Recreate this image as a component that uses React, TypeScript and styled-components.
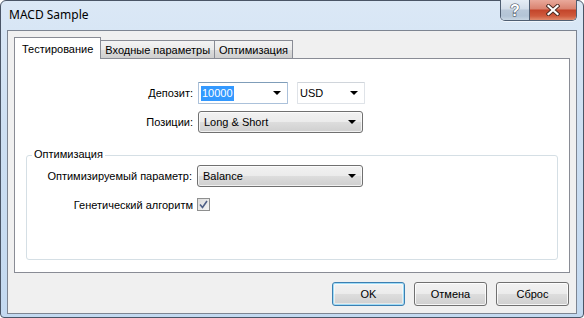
import styled, { createGlobalStyle } from "styled-components";

const Global = createGlobalStyle`
    html, body {
        margin: 0;
        padding: 0;
        background: #ffffff;
    }
    * {
        box-sizing: border-box;
    }
`;

const Window = styled.div`
    width: 584px;
    height: 318px;
    display: flex;
    flex-direction: column;
    padding: 0 6px 3px 6px;
    border: 1px solid #4a5566;
    border-radius: 6px 6px 4px 4px;
    background: linear-gradient(180deg, #dbe8f6 0%, #cddff2 40%, #c3d9f0 100%);
    font-family: "Liberation Sans", Arial, sans-serif;
    font-size: 11px;
    color: #000;
`;

const TitleBar = styled.div`
    height: 29px;
    display: flex;
    justify-content: space-between;
    align-items: flex-start;
    padding-left: 2px;
`;

const Title = styled.div`
    font-family: "Noto Sans", "Open Sans", sans-serif;
    font-size: 12px;
    line-height: 16px;
    margin-top: 6px;
    color: #000;
`;

const Captions = styled.div`
    display: flex;
    margin-top: -1px;
    border: 1px solid #4f5e72;
    border-top: none;
    border-radius: 0 0 5px 5px;
    overflow: hidden;
    box-shadow: 0 1px 0 rgba(255, 255, 255, 0.6);
`;

const CapButton = styled.div<{ $close?: boolean }>`
    width: ${(p) => (p.$close ? 47 : 28)}px;
    height: 20px;
    display: flex;
    align-items: center;
    justify-content: center;
    background: ${(p) =>
        p.$close
            ? "linear-gradient(180deg, #e9a99b 0%, #d9826f 45%, #c3442a 50%, #cf5a3d 80%, #e08a6d 100%)"
            : "linear-gradient(180deg, #e6edf5 0%, #d3dde9 45%, #b9c8d9 50%, #b3c4d6 80%, #c8d6e4 100%)"};
    & + & {
        border-left: 1px solid #4f5e72;
    }
`;

const Help = styled.span`
    font-family: "Liberation Sans", Arial, sans-serif;
    font-weight: bold;
    font-size: 16px;
    line-height: 16px;
    color: #fff;
    -webkit-text-stroke: 1px #3a4656;
    paint-order: stroke fill;
    margin-top: 1px;
`;

const Client = styled.div`
    flex: 1;
    display: flex;
    flex-direction: column;
    background: #f0f0f0;
    border: 1px solid #7d8592;
    padding: 6px 6px 7px 6px;
`;

const TabStrip = styled.div`
    height: 21px;
    display: flex;
    align-items: flex-end;
`;

const Tab = styled.div<{ $active?: boolean }>`
    position: relative;
    display: flex;
    align-items: center;
    justify-content: center;
    border: 1px solid #898c95;
    border-bottom: none;
    white-space: nowrap;
    height: ${(p) => (p.$active ? 22 : 18)}px;
    margin-bottom: ${(p) => (p.$active ? -1 : 0)}px;
    padding: ${(p) => (p.$active ? "0 7px 0 7px" : "0 4px")};
    background: ${(p) =>
        p.$active ? "#ffffff" : "linear-gradient(180deg, #f3f3f3 0%, #ebebeb 50%, #dddddd 51%, #cfcfcf 100%)"};
    z-index: ${(p) => (p.$active ? 2 : 1)};
    & + & {
        margin-left: -1px;
    }
`;

const Panel = styled.div`
    flex: 1;
    display: flex;
    flex-direction: column;
    background: #ffffff;
    border: 1px solid #898c95;
`;

const FormGrid = styled.div<{ $label: number }>`
    display: grid;
    grid-template-columns: ${(p) => p.$label}px auto;
    column-gap: 5px;
    align-items: center;
    justify-items: start;
`;

const MainForm = styled(FormGrid)`
    margin-top: 23px;
    row-gap: 7px;
`;

const Label = styled.div`
    justify-self: end;
    white-space: nowrap;
`;

const Inline = styled.div`
    display: flex;
    gap: 9px;
`;

const Combo = styled.div<{ $w: number; $button?: boolean; $edit?: boolean }>`
    width: ${(p) => p.$w}px;
    height: 22px;
    display: flex;
    align-items: center;
    justify-content: space-between;
    padding: 0 6px 0 ${(p) => (p.$button ? 5 : 2)}px;
    border: 1px solid ${(p) => (p.$button ? "#707070" : p.$edit ? "#abc1da" : "#dfe3e8")};
    border-top-color: ${(p) => (p.$button ? "#707070" : p.$edit ? "#7f9db9" : "#d0d5db")};
    border-radius: ${(p) => (p.$button ? 3 : 1)}px;
    background: ${(p) =>
        p.$button ? "linear-gradient(180deg, #f2f2f2 0%, #ebebeb 50%, #dddddd 51%, #cfcfcf 100%)" : "#ffffff"};
    box-shadow: ${(p) => (p.$button ? "inset 0 0 0 1px rgba(255,255,255,0.7)" : "none")};
`;

const Selected = styled.span`
    background: #3399ff;
    color: #fff;
    padding: 1px 1px 2px 1px;
`;

const Arrow = styled.span`
    width: 0;
    height: 0;
    border-left: 4px solid transparent;
    border-right: 4px solid transparent;
    border-top: 4px solid #000;
`;

const Group = styled.div`
    position: relative;
    margin: 22px 11px 12px 11px;
    flex: 1;
    border: 1px solid #d5dfe5;
    border-radius: 3px;
    padding-top: 9px;
`;

const GroupCaption = styled.span`
    position: absolute;
    top: -8px;
    left: 5px;
    padding: 0 2px;
    background: #ffffff;
`;

const GroupForm = styled(FormGrid)`
    row-gap: 11px;
`;

const CheckLabel = styled(Label)`
    margin-right: -1px;
`;

const Check = styled.div`
    width: 13px;
    height: 13px;
    border: 1px solid #8e8f8f;
    background: linear-gradient(135deg, #dcdcdc 0%, #f4f4f4 100%);
    display: flex;
    align-items: center;
    justify-content: center;
`;

const ButtonRow = styled.div`
    display: flex;
    justify-content: flex-end;
    gap: 9px;
    margin-top: 9px;
    padding-right: 1px;
`;

const Button = styled.div<{ $default?: boolean }>`
    width: 73px;
    height: 24px;
    display: flex;
    align-items: center;
    justify-content: center;
    border: 1px solid ${(p) => (p.$default ? "#3c7fb1" : "#707070")};
    border-radius: 3px;
    background: linear-gradient(180deg, #f2f2f2 0%, #ebebeb 50%, #dddddd 51%, #cfcfcf 100%);
    box-shadow: ${(p) =>
        p.$default ? "inset 0 0 0 1px #9fdcf7, inset 0 0 0 2px rgba(255,255,255,0.5)" : "inset 0 0 0 1px rgba(255,255,255,0.8)"};
`;

function CloseIcon() {
    return (
        <svg width="14" height="12" viewBox="0 0 14 12">
            <path d="M2.5 2 L11.5 10 M11.5 2 L2.5 10" stroke="#4a2a22" strokeWidth="4" strokeLinecap="square" />
            <path d="M2.5 2 L11.5 10 M11.5 2 L2.5 10" stroke="#ffffff" strokeWidth="2.2" strokeLinecap="square" />
        </svg>
    );
}

function CheckMark() {
    return (
        <svg width="9" height="9" viewBox="0 0 9 9">
            <path d="M1 4.5 L3.5 7.5 L8 1" fill="none" stroke="#4e5f86" strokeWidth="1.6" />
        </svg>
    );
}

export default function App() {
    return (
        <>
            <Global />
            <Window>
                <TitleBar>
                    <Title>MACD Sample</Title>
                    <Captions>
                        <CapButton>
                            <Help>?</Help>
                        </CapButton>
                        <CapButton $close>
                            <CloseIcon />
                        </CapButton>
                    </Captions>
                </TitleBar>
                <Client>
                    <TabStrip>
                        <Tab $active>Тестирование</Tab>
                        <Tab>Входные параметры</Tab>
                        <Tab>Оптимизация</Tab>
                    </TabStrip>
                    <Panel>
                        <MainForm $label={178}>
                            <Label>Депозит:</Label>
                            <Inline>
                                <Combo $w={90} $edit>
                                    <Selected>10000</Selected>
                                    <Arrow />
                                </Combo>
                                <Combo $w={68}>
                                    <span>USD</span>
                                    <Arrow />
                                </Combo>
                            </Inline>
                            <Label>Позиции:</Label>
                            <Combo $w={165} $button>
                                <span>Long &amp; Short</span>
                                <Arrow />
                            </Combo>
                        </MainForm>
                        <Group>
                            <GroupCaption>Оптимизация</GroupCaption>
                            <GroupForm $label={165}>
                                <Label>Оптимизируемый параметр:</Label>
                                <Combo $w={166} $button>
                                    <span>Balance</span>
                                    <Arrow />
                                </Combo>
                                <CheckLabel>Генетический алгоритм</CheckLabel>
                                <Check>
                                    <CheckMark />
                                </Check>
                            </GroupForm>
                        </Group>
                    </Panel>
                    <ButtonRow>
                        <Button $default>OK</Button>
                        <Button>Отмена</Button>
                        <Button>Сброс</Button>
                    </ButtonRow>
                </Client>
            </Window>
        </>
    );
}
